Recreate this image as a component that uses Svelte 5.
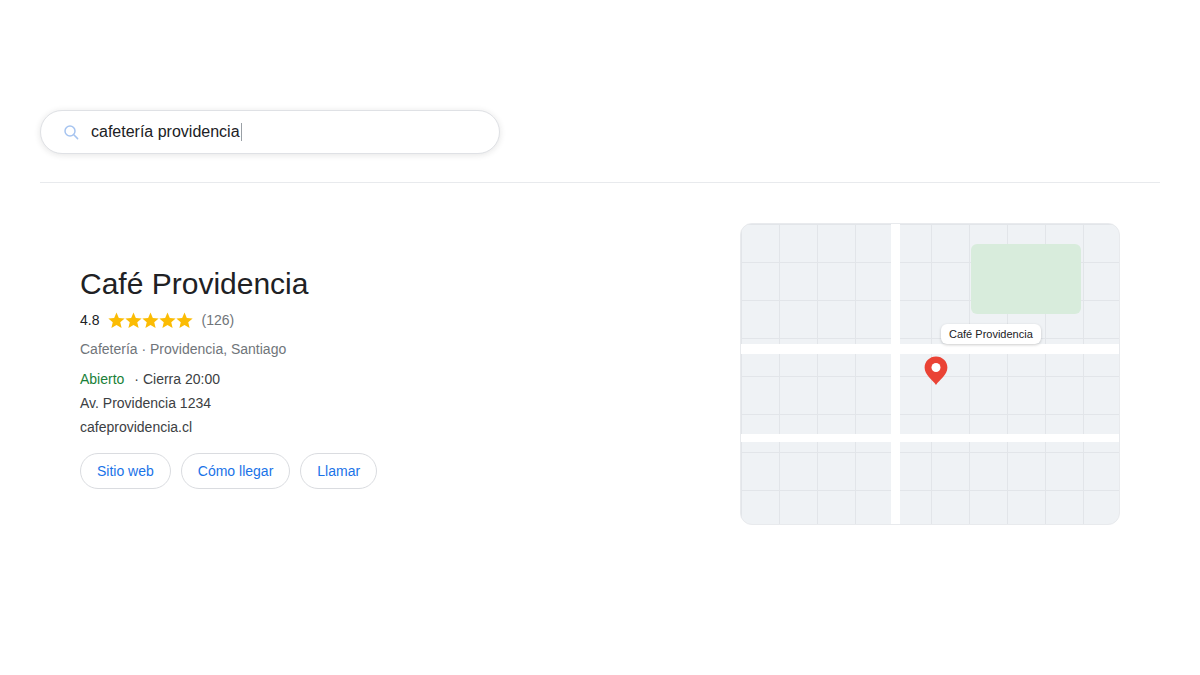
<script>
  const stars = [1, 2, 3, 4, 5];
  const actions = ['Sitio web', 'Cómo llegar', 'Llamar'];
</script>

<div class="page">
  <div class="search">
    <svg class="glass" width="16" height="16" viewBox="0 0 16 16" fill="none" stroke="#a6c4f0" stroke-width="1.5">
      <circle cx="7" cy="7" r="5" />
      <path d="M10.8 10.8 L14.6 14.6" stroke-linecap="round" />
    </svg>
    <span class="query">cafetería providencia</span><span class="caret"></span>
  </div>
  <hr class="rule" />
  <main class="result">
    <section class="info">
      <h1>Café Providencia</h1>
      <div class="rating">
        <span class="score">4.8</span>
        <span class="stars">
          {#each stars as s (s)}
            <svg width="17" height="17" viewBox="0 0 24 24"><path fill="#fbbc04" d="M12 .8l3.300 7.600 8.200.8-6.200 5.400 1.900 8.100L12 18.500l-7.200 4.200 1.900-8.100L.5 9.200l8.200-.8z" /></svg>
          {/each}
        </span>
        <span class="count">(126)</span>
      </div>
      <div class="meta">Cafetería · Providencia, Santiago</div>
      <div class="line hours"><span class="open">Abierto</span><span class="close">· Cierra 20:00</span></div>
      <div class="line">Av. Providencia 1234</div>
      <div class="line">cafeprovidencia.cl</div>
      <div class="actions">
        {#each actions as a (a)}
          <button type="button">{a}</button>
        {/each}
      </div>
    </section>
    <div class="map">
      <div class="park"></div>
      <div class="road h1"></div>
      <div class="road h2"></div>
      <div class="road v1"></div>
      <div class="label">Café Providencia</div>
      <svg class="pin" width="24" height="30" viewBox="0 0 24 30">
        <path fill="#ea4335" d="M12 .5C5.600.5.600 5.400.600 11.600c0 7.600 8.200 12.600 11.400 17.400 3.200-4.800 11.400-9.800 11.400-17.400C23.400 5.400 18.400.5 12 .5z" />
        <circle cx="12" cy="11.500" r="4.500" fill="#fff" />
      </svg>
    </div>
  </main>
</div>

<style>
  :global(body) {
    margin: 0;
    background: #fff;
    font-family: "Liberation Sans", Arial, sans-serif;
  }
  .page {
    width: 1200px;
    height: 675px;
    box-sizing: border-box;
    padding: 110px 40px 0;
  }
  .search {
    width: 460px;
    height: 44px;
    box-sizing: border-box;
    display: flex;
    align-items: center;
    padding-left: 22px;
    border: 1px solid #dfe1e5;
    border-radius: 22px;
    box-shadow: 0 1px 6px rgba(32, 33, 36, 0.12);
    background: #fff;
  }
  .glass { flex: none; margin-right: 12px; }
  .query { font-size: 16px; color: #202124; }
  .caret { width: 1px; height: 18px; margin-left: 1px; background: #9aa0a6; }
  .rule {
    margin: 28px 0 0;
    border: 0;
    border-top: 1px solid #e8eaed;
  }
  .result {
    display: flex;
    justify-content: space-between;
    padding: 40px 40px 0;
  }
  .info { padding-top: 42px; }
  h1 {
    margin: 0;
    font-size: 30px;
    line-height: 38px;
    font-weight: 400;
    color: #202124;
  }
  .rating {
    display: flex;
    align-items: center;
    height: 20px;
    margin-top: 7px;
    font-size: 14px;
  }
  .score { color: #202124; margin-right: 9px; }
  .stars { display: flex; width: 84px; }
  .stars svg { flex: none; display: block; }
  .count { color: #70757a; margin-left: 9px; }
  .meta {
    margin-top: 9px;
    font-size: 14px;
    line-height: 20px;
    color: #70757a;
  }
  .line {
    margin-top: 4px;
    font-size: 14px;
    line-height: 20px;
    color: #3c4043;
  }
  .hours { margin-top: 10px; }
  .open { color: #188038; margin-right: 10px; }
  .actions {
    display: flex;
    gap: 10px;
    margin-top: 16px;
  }
  button {
    height: 36px;
    padding: 0 16px;
    border: 1px solid #dadce0;
    border-radius: 18px;
    background: #fff;
    color: #1a73e8;
    font: 14px "Liberation Sans", Arial, sans-serif;
  }
  .map {
    position: relative;
    width: 380px;
    height: 302px;
    box-sizing: border-box;
    overflow: hidden;
    border: 1px solid #e8eaed;
    border-radius: 12px;
    background-color: #eff2f5;
    background-image:
      linear-gradient(#e2e5e9 1px, transparent 1px),
      linear-gradient(90deg, #e2e5e9 1px, transparent 1px);
    background-size: 38px 38px;
    background-position: 0 0;
  }
  .park {
    position: absolute;
    left: 230px;
    top: 20px;
    width: 110px;
    height: 70px;
    border-radius: 6px;
    background: #d8ecdc;
  }
  .road { position: absolute; background: #fff; }
  .h1 { left: 0; right: 0; top: 120px; height: 10px; }
  .h2 { left: 0; right: 0; top: 210px; height: 8px; }
  .v1 { top: 0; bottom: 0; left: 150px; width: 9px; }
  .label {
    position: absolute;
    left: 200px;
    top: 100px;
    padding: 0 8px;
    height: 20px;
    line-height: 20px;
    font-size: 11px;
    color: #202124;
    background: #fff;
    border-radius: 6px;
    box-shadow: 0 1px 3px rgba(0, 0, 0, 0.2);
    white-space: nowrap;
  }
  .pin {
    position: absolute;
    left: 183px;
    top: 132px;
  }
</style>
